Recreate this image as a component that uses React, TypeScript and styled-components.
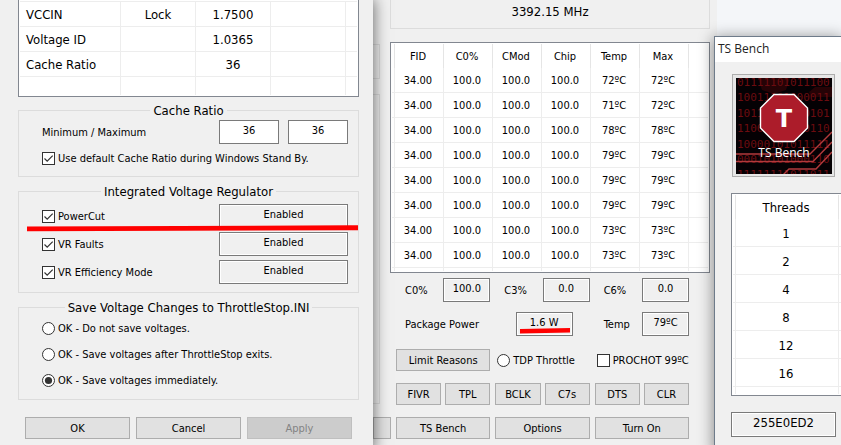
import React, { useId } from "react";
import styled, { createGlobalStyle, css } from "styled-components";

const GlobalStyle = createGlobalStyle`
  *, *::before, *::after { box-sizing: border-box; }
  html, body { margin: 0; height: 100%; overflow: hidden; }
  body, button, input {
    font-family: "DejaVu Sans Condensed", "DejaVu Sans", sans-serif;
    font-stretch: condensed;
    font-size: 11px;
    line-height: 16px;
    color: #000;
  }
`;

/* ---------- windows ---------- */

const Desktop = styled.main`
  display: grid;
  grid-template-columns: minmax(0, 373fr) minmax(0, 341fr) minmax(0, 127fr);
  height: 100vh;
  overflow: hidden;
  background: #f4f6f9;
`;

const VoltageWindow = styled.section`
  z-index: 3;
  padding: 0 14px 0 18px;
  background: #f0f0f0;
  box-shadow: 0 0 14px 1px rgba(0, 0, 0, 0.55);
`;

const MonitorWindow = styled.section`
  z-index: 1;
  display: flex;
  margin-right: -3px;
  background: #f0f0f0;
`;

const BenchColumn = styled.section`
  z-index: 2;
  padding-top: 36px;
  display: flex;
  flex-direction: column;
`;

const BenchWindow = styled.div`
  flex: 1;
  border: solid #6e7b8a;
  border-width: 1px 0 0 1px;
  background: #f0f0f0;
  box-shadow: 0 2px 14px 1px rgba(0, 0, 0, 0.42);
`;

/* ---------- grids of data ---------- */

const ListBox = styled.div<{ $openTop?: boolean }>`
  border: 1px solid #828790;
  padding: 1px;
  background: #fff;
  overflow: hidden;
  ${(p) => p.$openTop && css`border-top: 0;`}
`;

const DataTable = styled.table<{ $row: number; $size?: number }>`
  width: 100%;
  table-layout: fixed;
  border-collapse: separate;
  border-spacing: 0;
  text-align: center;
  font-size: ${(p) => p.$size ?? 11}px;

  th, td {
    height: ${(p) => p.$row}px;
    padding: 2px 2px 0 0;
    font-weight: 400;
    white-space: nowrap;
    border-right: 1px solid #ededed;
    border-bottom: 1px solid #ededed;
  }
  th { height: 24px; border-right-color: #e5e5e5; border-bottom: 0; }
  th:last-child, td:last-child { border-right: 0; }
`;

const VoltageTable = styled(DataTable)`
  border-top: 1px solid #ededed;
  td { padding-right: 0; }
  td:first-child { text-align: left; padding-left: 6px; }
`;

const Filler = styled.tr<{ $height: number }>`
  && td { height: ${(p) => p.$height}px; border-bottom: 0; }
`;

/* ---------- groups and rows ---------- */

const Group = styled.fieldset<{ $gap: number }>`
  min-width: 0;
  margin: ${(p) => p.$gap}px 0 0;
  padding: 0;
  border: 1px solid #dcdcdc;
`;

const GroupBody = styled.div<{ $top: number; $bottom: number; $gap: number }>`
  display: flex;
  flex-direction: column;
  gap: ${(p) => p.$gap}px;
  padding: ${(p) => p.$top}px 10px ${(p) => p.$bottom}px 23px;
`;

const Legend = styled.legend`
  margin: 0 auto;
  padding: 0 3px;
  font-size: 13px;
  line-height: 17px;
`;

const Row = styled.div`
  position: relative;
  display: flex;
  align-items: center;
  justify-content: space-between;
  height: 24px;
`;

const Pair = styled.div`
  display: flex;
  gap: 9px;
`;

const Field = styled.input<{ $width: number; $white?: boolean; $size?: number }>`
  flex: none;
  width: ${(p) => p.$width}px;
  height: 24px;
  margin: 0;
  padding: 0 0 4px;
  border: 1px solid #7a7a7a;
  box-shadow: inset 0 0 0 1px #fff;
  border-radius: 0;
  outline: 0;
  background: ${(p) => (p.$white ? "#fff" : "#f0f0f0")};
  text-align: center;
  font-size: ${(p) => p.$size ?? 11}px;
`;

const Button = styled.button`
  flex: 1 1 0;
  min-width: 0;
  height: 22px;
  padding: 2px 0 0;
  border: 1px solid #adadad;
  border-radius: 0;
  background: #e1e1e1;
  white-space: nowrap;
  &:disabled { border-color: #bfbfbf; background: #ccc; color: #838383; }
`;

const Footer = styled.footer`
  display: flex;
  gap: 6px;
  margin: 17px 7px 0;
`;

/* ---------- tick boxes and radios ---------- */

const Choice = styled.label`
  display: flex;
  align-items: center;
  gap: 3px;
  white-space: nowrap;
`;

const Caption = styled.span`
  padding-top: 1px;
`;

const Mark = styled.span`
  display: grid;
  flex: none;
  width: 13px;
  height: 13px;
  > * { grid-area: 1 / 1; }
  svg { pointer-events: none; visibility: hidden; }
  input:checked + svg { visibility: visible; }
`;

const MarkInput = styled.input`
  appearance: none;
  width: 13px;
  height: 13px;
  margin: 0;
  border: 1px solid #333;
  background: #fff;
  &[type="radio"] { border-radius: 50%; }
`;

function Check({ label, checked }: { label: string; checked?: boolean }) {
  return (
    <Choice>
      <Mark>
        <MarkInput type="checkbox" defaultChecked={checked} />
        <svg width="13" height="13" viewBox="0 0 13 13" fill="none" stroke="#333" strokeWidth="1.2">
          <path d="M2.5 6.5 5.2 9.2 10.7 3.7" />
        </svg>
      </Mark>
      <Caption>{label}</Caption>
    </Choice>
  );
}

function Radio({ label, name, checked }: { label: string; name: string; checked?: boolean }) {
  return (
    <Choice>
      <Mark>
        <MarkInput type="radio" name={name} defaultChecked={checked} />
        <svg width="13" height="13" viewBox="0 0 13 13" fill="#333">
          <circle cx="6.5" cy="6.5" r="3.6" />
        </svg>
      </Mark>
      <Caption>{label}</Caption>
    </Choice>
  );
}

/* ---------- red marker strokes ---------- */

const WideStroke = styled.svg`
  position: absolute;
  left: -15px;
  top: 20px;
  width: calc(100% + 25px);
  height: 8px;
  z-index: 1;
`;

const FieldWrap = styled.div`
  position: relative;
  display: flex;
`;

const ShortStroke = styled.svg`
  position: absolute;
  left: 4px;
  top: 15px;
  width: 50px;
  height: 7px;
`;

/* ---------- left window ---------- */

const voltages = [
  ["VCCIN", "Lock", "1.7500"],
  ["Voltage ID", "", "1.0365"],
  ["Cache Ratio", "", "36"],
];
const regulators = ["PowerCut", "VR Faults", "VR Efficiency Mode"];

function VoltagePanel() {
  return (
    <VoltageWindow>
      <ListBox $openTop>
        <VoltageTable $row={25} $size={13}>
          <colgroup>
            <col width="101" /><col width="75" /><col width="75" /><col width="75" /><col />
          </colgroup>
          <tbody>
            {voltages.map(([name, lock, value]) => (
              <tr key={name}><td>{name}</td><td>{lock}</td><td>{value}</td><td /><td /></tr>
            ))}
            <Filler $height={18}><td /><td /><td /><td /><td /></Filler>
          </tbody>
        </VoltageTable>
      </ListBox>

      <Group $gap={5}>
        <Legend>Cache Ratio</Legend>
        <GroupBody $top={1} $bottom={6} $gap={2}>
          <Row>
            <Caption>Minimum / Maximum</Caption>
            <Pair>
              <Field $width={60} $white defaultValue="36" aria-label="Minimum" />
              <Field $width={60} $white defaultValue="36" aria-label="Maximum" />
            </Pair>
          </Row>
          <Row>
            <Check label="Use default Cache Ratio during Windows Stand By." checked />
          </Row>
        </GroupBody>
      </Group>

      <Group $gap={6}>
        <Legend>Integrated Voltage Regulator</Legend>
        <GroupBody $top={4} $bottom={8} $gap={4}>
          {regulators.map((name, i) => (
            <Row key={name}>
              <Check label={name} checked />
              <Field $width={129} readOnly value="Enabled" aria-label={`${name} state`} />
              {i === 0 && (
                <WideStroke viewBox="0 0 331 8" preserveAspectRatio="none" aria-hidden="true">
                  <path d="M0 2.6 331 1.2V6.2L0 7.3Z" fill="#f00" />
                </WideStroke>
              )}
            </Row>
          ))}
        </GroupBody>
      </Group>

      <Group $gap={6}>
        <Legend>Save Voltage Changes to ThrottleStop.INI</Legend>
        <GroupBody $top={0} $bottom={7} $gap={2}>
          <Row><Radio name="save" label="OK - Do not save voltages." /></Row>
          <Row><Radio name="save" label="OK - Save voltages after ThrottleStop exits." /></Row>
          <Row><Radio name="save" label="OK - Save voltages immediately." checked /></Row>
        </GroupBody>
      </Group>

      <Footer>
        <Button>OK</Button>
        <Button>Cancel</Button>
        <Button disabled>Apply</Button>
      </Footer>
    </VoltageWindow>
  );
}

/* ---------- middle window ---------- */

const Sliver = styled.div`
  flex: 0 0 17px;
  min-width: 0;
  display: flex;
  flex-direction: column;
  align-items: flex-start;
`;

const SliverGroup = styled.div<{ $top: number; $height: number }>`
  width: 7px;
  height: ${(p) => p.$height}px;
  margin-top: ${(p) => p.$top}px;
  border: 1px solid #dcdcdc;
  border-left: 0;
`;

const SliverButton = styled.div`
  width: 18px;
  height: 22px;
  margin-top: 13px;
  border: 1px solid #adadad;
  background: #e1e1e1;
`;

const Monitor = styled.div`
  flex: 1;
  min-width: 0;
  padding-right: 7px;
`;

const Frequency = styled.div`
  height: 29px;
  margin-bottom: 13px;
  border: 1px solid #dcdcdc;
  border-top: 0;
  text-align: center;
  font-size: 13px;
  line-height: 24px;
`;

const Controls = styled.div`
  display: grid;
  grid-template-columns: repeat(3, minmax(0, 1fr));
  column-gap: 5px;
  padding: 5px 21px 0 6px;
`;

const Reading = styled.label<{ $span?: number; $right?: number }>`
  grid-column: span ${(p) => p.$span ?? 1};
  display: flex;
  align-items: center;
  justify-content: space-between;
  padding: 0 ${(p) => p.$right ?? 0}px 0 9px;
  margin-bottom: 10px;
  white-space: nowrap;
`;

const ControlCell = styled.div`
  display: flex;
  align-items: center;
  gap: 4px;
  height: 22px;
  margin-bottom: 12px;
`;

const ChoiceCell = styled(ControlCell)`
  padding-left: 2px;
`;

const Spacer = styled.div`
  grid-column: 1 / -1;
  height: 3px;
`;

const heads = ["FID", "C0%", "CMod", "Chip", "Temp", "Max"];
const temps = [[72, 72], [71, 72], [78, 78], [79, 79], [79, 79], [79, 79], [73, 73], [73, 73]];

function MonitorPanel() {
  return (
    <MonitorWindow>
      <Sliver>
        <SliverGroup $top={44} $height={35} />
        <SliverGroup $top={15} $height={310} />
        <SliverButton />
      </Sliver>
      <Monitor>
        <Frequency>3392.15 MHz</Frequency>
        <ListBox>
          <DataTable $row={25} $size={11}>
            <colgroup>
              <col width="3" />
              {heads.map((h) => <col key={h} width="49" />)}
              <col />
            </colgroup>
            <thead>
              <tr><th />{heads.map((h) => <th key={h} scope="col">{h}</th>)}<th /></tr>
            </thead>
            <tbody>
              {temps.map(([t, m], i) => (
                <tr key={i}>
                  <td /><td>34.00</td><td>100.0</td><td>100.0</td><td>100.0</td>
                  <td>{t}ºC</td><td>{m}ºC</td><td />
                </tr>
              ))}
              <Filler $height={3}>{Array.from({ length: 8 }, (_, i) => <td key={i} />)}</Filler>
            </tbody>
          </DataTable>
        </ListBox>
        <Controls>
          <Reading><Caption>C0%</Caption><Field $width={47} readOnly value="100.0" /></Reading>
          <Reading><Caption>C3%</Caption><Field $width={47} readOnly value="0.0" /></Reading>
          <Reading><Caption>C6%</Caption><Field $width={47} readOnly value="0.0" /></Reading>
          <Reading $span={2} $right={17}>
            <Caption>Package Power</Caption>
            <FieldWrap>
              <Field $width={57} readOnly value="1.6 W" />
              <ShortStroke viewBox="0 0 50 7" aria-hidden="true">
                <path d="M0 2 50 1V5.5L0 6.5Z" fill="#f00" />
              </ShortStroke>
            </FieldWrap>
          </Reading>
          <Reading><Caption>Temp</Caption><Field $width={47} readOnly value="79ºC" /></Reading>
          <Spacer />
          <ControlCell><Button>Limit Reasons</Button></ControlCell>
          <ChoiceCell><Radio name="tdp" label="TDP Throttle" /></ChoiceCell>
          <ChoiceCell><Check label="PROCHOT 99ºC" /></ChoiceCell>
          <ControlCell><Button>FIVR</Button><Button>TPL</Button></ControlCell>
          <ControlCell><Button>BCLK</Button><Button>C7s</Button></ControlCell>
          <ControlCell><Button>DTS</Button><Button>CLR</Button></ControlCell>
          <ControlCell><Button>TS Bench</Button></ControlCell>
          <ControlCell><Button>Options</Button></ControlCell>
          <ControlCell><Button>Turn On</Button></ControlCell>
        </Controls>
      </Monitor>
    </MonitorWindow>
  );
}

/* ---------- right window ---------- */

const TitleBar = styled.h1`
  height: 25px;
  margin: 0;
  padding-left: 3px;
  background: #fff;
  font: 400 12px/24px "Open Sans", sans-serif;
  color: #222;
`;

const BenchBody = styled.div`
  padding: 12px 5px 0 16px;
`;

const ImageButton = styled.button`
  display: grid;
  width: 103px;
  height: 103px;
  margin-left: 1px;
  padding: 3px;
  border: 1px solid #adadad;
  background: #e6e6e6;
  > * { grid-area: 1 / 1; }
`;

const ImageLabel = styled.span`
  align-self: end;
  padding-bottom: 12px;
  color: #fff;
  font: 400 12px/18px "Open Sans", sans-serif;
`;

const ThreadBox = styled(ListBox)`
  margin: 16px -8px 16px 0;
`;

const Checksum = styled(Field)`
  height: 25px;
`;

const bits = [
  "01111101011100",
  "10011101000011",
  "10110100010101",
  "11001010110110",
  "10000101011111",
  "00010101000110",
  "11111111011011",
];

function BenchPanel() {
  const clip = useId();
  return (
    <BenchColumn>
      <BenchWindow>
        <TitleBar>TS Bench</TitleBar>
        <BenchBody>
          <ImageButton>
            <svg width="96" height="96" viewBox="0 0 96 96" aria-hidden="true">
              <clipPath id={clip}><path d="M0 0H96V96H0Z" /></clipPath>
              <g clipPath={`url(#${clip})`}>
                <path d="M0 0H96V96H0Z" fill="#050104" />
                <path d="M22 0H54L50 12 38 16 26 12ZM73 14 79 9H96V19H75Z" fill="#260306" />
                <g fill="#6c0c10" fontFamily="DejaVu Sans Mono, monospace" fontSize="11">
                  {bits.map((b, i) => <text key={i} x="1" y={8 + i * 15.4}>{b}</text>)}
                </g>
                <g fill="none" stroke="#b23a3c" strokeWidth="1.4">
                  <path d="M0 76H74L96 54M0 83.5H77L96 64M47 97 53 91H80L96 74" />
                </g>
                <path d="M38 16.5H58L71.5 30V50L58 63.5H38L24.5 50V30Z" fill="#ac1c2a" stroke="#fff" strokeWidth="1.4" />
                <text x="48" y="49" textAnchor="middle" fill="#fff" fontFamily="DejaVu Sans, sans-serif" fontStretch="normal" fontWeight="700" fontSize="24">T</text>
              </g>
            </svg>
            <ImageLabel>TS Bench</ImageLabel>
          </ImageButton>
          <ThreadBox>
            <DataTable $row={28} $size={13}>
              <colgroup><col width="3" /><col width="103" /><col /></colgroup>
              <thead><tr><th /><th scope="col">Threads</th><th /></tr></thead>
              <tbody>
                {[1, 2, 4, 8, 12, 16].map((n) => <tr key={n}><td /><td>{n}</td><td /></tr>)}
                <Filler $height={7}><td /><td /><td /></Filler>
              </tbody>
            </DataTable>
          </ThreadBox>
          <Checksum $width={105} $size={13} readOnly value="255E0ED2" aria-label="Checksum" />
        </BenchBody>
      </BenchWindow>
    </BenchColumn>
  );
}

export default function App() {
  return (
    <>
      <GlobalStyle />
      <Desktop>
        <VoltagePanel />
        <MonitorPanel />
        <BenchPanel />
      </Desktop>
    </>
  );
}
